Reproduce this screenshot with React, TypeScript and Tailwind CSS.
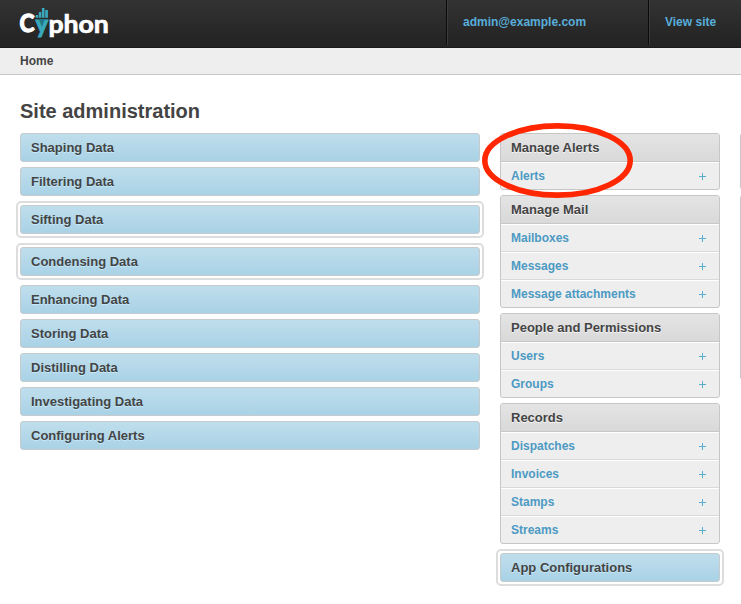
import React from "react";

const ring = "rounded-[5px] border-2 border-[#ddd] p-[2px] -mx-1";

function Bar({ title, focused = false }: { title: string; focused?: boolean }) {
  const bar = (
    <h2 className="h-[29px] rounded-[3px] border border-[#c7cbcd] bg-linear-to-b from-[#bfdeec] to-[#a9d2e6] pl-2.5 text-[13px] leading-[27px] font-bold text-[#444] [text-shadow:0_1px_0_#c4e9fa]">
      {title}
    </h2>
  );
  return focused ? <div className={ring}>{bar}</div> : bar;
}

function Module({ title, rows }: { title: string; rows: string[] }) {
  return (
    <section className="overflow-hidden rounded-[3px] border border-[#c7c7c7] bg-[#eee]">
      <h2 className="h-7 border-b border-[#c7c7c7] bg-linear-to-b from-[#e4e4e4] to-[#d9d9d9] pl-2.5 text-[13px] leading-[27px] font-bold text-[#444] [text-shadow:0_1px_0_#f5f5f5]">
        {title}
      </h2>
      {rows.map((row) => (
        <div
          key={row}
          className="flex h-7 items-start justify-between border-t border-b border-t-white border-b-[#d9d9d9] pr-[13px] pl-2.5 last:h-[27px] last:border-b-0"
        >
          <a className="text-[12px] leading-[26px] font-bold text-[#4c9ac3]">{row}</a>
          <svg width="7" height="7" viewBox="0 0 7 7" className="mt-[10px]">
            <path d="M0 3H7V4H0ZM3 0H4V7H3Z" fill="#59aecb" />
          </svg>
        </div>
      ))}
    </section>
  );
}

function Logo() {
  return (
    <svg width="100" height="40" viewBox="20 0 100 40" className="block overflow-visible">
      <path d="M38.5 19H45.5L42.4 28Z" fill="#1f7786" />
      <g fontFamily="Lato, 'Open Sans', sans-serif" fontWeight="700" fontSize="25" fill="#fff" stroke="#fff" strokeWidth="0.7">
        <text x="19.6" y="32.4" strokeWidth="1.3" textLength="15" lengthAdjust="spacingAndGlyphs">C</text>
        <text x="35.6" y="32.6" fill="#3aa9bd" stroke="#3aa9bd" strokeWidth="0.9" textLength="12.6" lengthAdjust="spacingAndGlyphs">y</text>
        <text x="48.4" y="32.6" textLength="60.5" lengthAdjust="spacingAndGlyphs">phon</text>
      </g>
      <g fill="#3aa9bd">
        <rect x="35.7" y="15" width="2.5" height="2.8" />
        <rect x="38.8" y="12" width="2.5" height="5.8" />
        <rect x="41.9" y="8" width="2.6" height="9.8" />
        <rect x="45.2" y="10" width="2.7" height="7.8" />
      </g>
    </svg>
  );
}

export default function App() {
  return (
    <div className="relative h-[604px] w-[741px] overflow-hidden bg-white font-['Liberation_Sans',Arial,sans-serif]">
      <header className="flex h-12 border-b border-[#1b191c] bg-linear-to-b from-[#333] to-[#222] text-[12px] leading-[44px] font-bold text-[#59aedb]">
        <div className="w-[446px] pl-5">
          <Logo />
        </div>
        <a className="h-[45px] w-[202px] border-l border-[#0b0b0b] pl-4 shadow-[inset_1px_0_0_#3c3c3c]">
          admin@example.com
        </a>
        <a className="h-[45px] flex-1 border-l border-[#0b0b0b] pl-4 shadow-[inset_1px_0_0_#3c3c3c]">View site</a>
      </header>
      <nav className="h-[27px] border-b border-[#c7c7c7] bg-[#eee] pl-5 text-[12px] leading-[26px] font-bold text-[#444]">
        Home
      </nav>
      <h1 className="mt-[24px] ml-5 h-[34px] text-[20px] leading-6 font-bold text-[#444]">Site administration</h1>
      <main className="ml-5 flex w-[940px] gap-5">
        <div className="flex w-[460px] flex-col gap-[5px]">
          <Bar title="Shaping Data" />
          <Bar title="Filtering Data" />
          <Bar title="Sifting Data" focused />
          <Bar title="Condensing Data" focused />
          <Bar title="Enhancing Data" />
          <Bar title="Storing Data" />
          <Bar title="Distilling Data" />
          <Bar title="Investigating Data" />
          <Bar title="Configuring Alerts" />
        </div>
        <div className="flex w-[220px] flex-col gap-[5px]">
          <Module title="Manage Alerts" rows={["Alerts"]} />
          <Module title="Manage Mail" rows={["Mailboxes", "Messages", "Message attachments"]} />
          <Module title="People and Permissions" rows={["Users", "Groups"]} />
          <Module title="Records" rows={["Dispatches", "Invoices", "Stamps", "Streams"]} />
          <Bar title="App Configurations" focused />
        </div>
        <div className="flex w-[220px] flex-col gap-[5px]">
          <div className="h-[57px] rounded-[3px] border border-[#c7c7c7]" />
          <div className="h-[185px] rounded-[3px] border border-[#c7c7c7]" />
        </div>
      </main>
      <svg className="absolute top-[118px] left-[478px]" width="160" height="84" viewBox="0 0 160 84">
        <ellipse cx="79.5" cy="42.5" rx="72.7" ry="34.6" fill="none" stroke="#ff2600" strokeWidth="5.6" />
      </svg>
    </div>
  );
}
